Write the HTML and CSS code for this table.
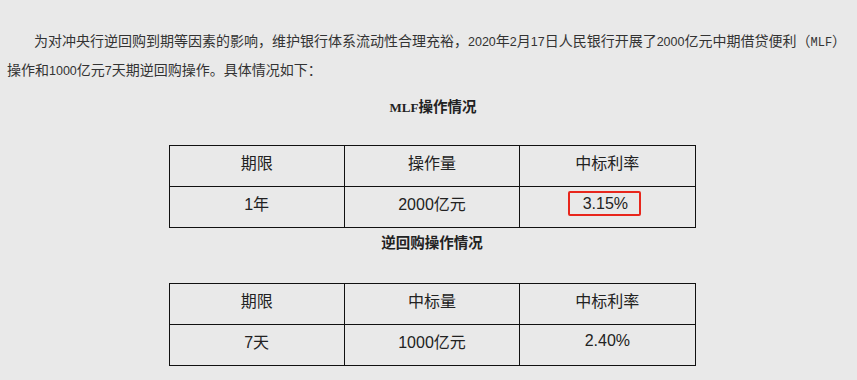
FILE: index.html
```html
<!DOCTYPE html>
<html lang="zh-CN">
<head>
<meta charset="utf-8">
<link rel="stylesheet" href="styles.css">
</head>
<body>
<div class="article">
  <p class="intro">为对冲央行逆回购到期等因素的影响，维护银行体系流动性合理充裕，<span class="num">2020</span>年<span class="num">2</span>月<span class="num">17</span>日人民银行开展了<span class="num">2000</span>亿元中期借贷便利（<span class="mono">MLF</span>）操作和<span class="num">1000</span>亿元<span class="num">7</span>天期逆回购操作。具体情况如下：</p>

  <h3 class="caption first"><span class="serif">MLF</span>操作情况</h3>
  <table class="data">
    <tr><td>期限</td><td>操作量</td><td>中标利率</td></tr>
    <tr><td>1年</td><td>2000亿元</td><td><span class="mark">3.15%</span></td></tr>
  </table>

  <h3 class="caption second">逆回购操作情况</h3>
  <table class="data">
    <tr><td>期限</td><td>中标量</td><td>中标利率</td></tr>
    <tr><td>7天</td><td>1000亿元</td><td>2.40%</td></tr>
  </table>
</div>
</body>
</html>
```

FILE: styles.css
```css
html, body {
  margin: 0;
  padding: 0;
  background: #e9e9e9;
}
body {
  font-family: "Liberation Sans", "Noto Sans CJK SC", sans-serif;
  color: #333;
  overflow: hidden;
}
.article {
  width: 850px;
  padding: 28px 0 0 7px;
}
.intro {
  margin: 0 14px 9px 0;
  font-size: 14px;
  line-height: 27px;
  text-indent: 27px;
}
.num {
  font-size: 12.5px;
}
.mono {
  font-family: "Liberation Mono", monospace;
  font-size: 12px;
}
.caption {
  margin: 0;
  text-align: center;
  font-size: 14.5px;
  line-height: 27px;
  font-weight: bold;
  color: #222;
}
.caption.first {
  margin-bottom: 24px;
  padding-left: 2px;
}
.caption.second {
  margin-top: 2px;
  margin-bottom: 26px;
}
.serif {
  font-family: "Liberation Serif", serif;
  font-size: 13px;
}
.data {
  margin: 0 auto;
  width: 527px;
  border-collapse: collapse;
  table-layout: fixed;
  font-size: 16px;
  color: #222;
}
.data td {
  border: 1px solid #111;
  height: 41px;
  box-sizing: border-box;
  padding: 0 0 8px;
  text-align: center;
  vertical-align: middle;
}
.mark {
  display: inline-block;
  border: 2px solid #e8261c;
  border-radius: 2px;
  padding: 0 11px 0 13px;
  margin-right: 6px;
  line-height: 21px;
}
```
